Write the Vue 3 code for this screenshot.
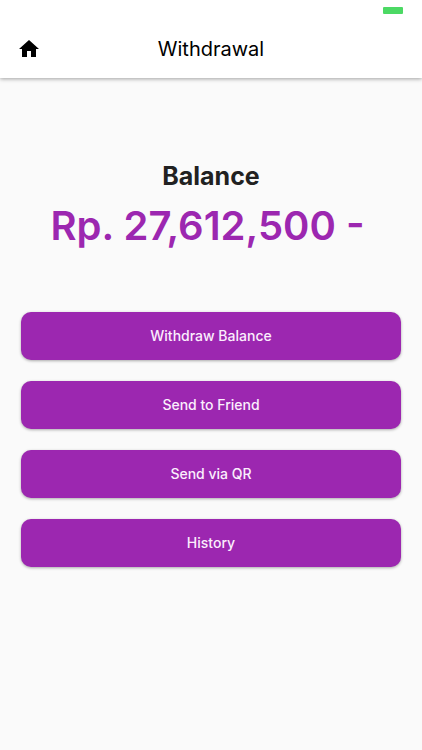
<script setup>
const actions = ['Withdraw Balance', 'Send to Friend', 'Send via QR', 'History']
const balance = 'Rp. 27,612,500 -'
</script>

<template>
  <div class="screen">
    <header class="app-bar">
      <div class="status-bar"><span class="battery"></span></div>
      <div class="toolbar">
        <button class="home" type="button" aria-label="Home">
          <svg viewBox="0 0 24 24" aria-hidden="true">
            <path d="M10 20v-6h4v6h5v-8h3L12 3 2 12h3v8z" />
          </svg>
        </button>
        <h1 class="title">Withdrawal</h1>
      </div>
    </header>

    <main class="content">
      <section class="summary">
        <h2 class="label">Balance</h2>
        <p class="amount">{{ balance }}</p>
      </section>
      <nav class="actions">
        <button v-for="action in actions" :key="action" class="action" type="button">
          {{ action }}
        </button>
      </nav>
    </main>
  </div>
</template>

<style>
body {
  margin: 0;
  background: #fafafa;
}
</style>

<style scoped>
.screen {
  min-height: 100vh;
  background: #fafafa;
  font-family: Inter, "Liberation Sans", sans-serif;
}

.app-bar {
  position: relative;
  background: #fff;
  box-shadow: 0 1px 4px rgba(0, 0, 0, 0.36);
}

.status-bar {
  display: flex;
  justify-content: flex-end;
  box-sizing: border-box;
  height: 20px;
  padding: 7px 19px 0 0;
}

.battery {
  width: 20px;
  height: 7px;
  border-radius: 1px;
  background: #4cd964;
}

.toolbar {
  display: grid;
  grid-template-columns: 24px 1fr 24px;
  align-items: center;
  height: 58px;
  padding: 0 17px;
}

.home {
  width: 24px;
  height: 24px;
  padding: 0;
  border: 0;
  background: none;
  color: #000;
}

.home svg {
  display: block;
  width: 24px;
  height: 24px;
  fill: currentColor;
}

.title {
  margin: 0;
  font-size: 20px;
  font-weight: 400;
  line-height: 24px;
  text-align: center;
  color: #000;
}

.content {
  padding: 81px 21px 24px;
}

.summary {
  text-align: center;
}

.label {
  margin: 0;
  font-size: 25px;
  font-weight: 700;
  line-height: 34px;
  color: #212121;
}

.amount {
  margin: 8px 0 0;
  padding-right: 7px;
  font-size: 40px;
  font-weight: 600;
  line-height: 50px;
  white-space: nowrap;
  color: #9c27b0;
}

.actions {
  display: grid;
  gap: 21px;
  margin-top: 61px;
}

.action {
  height: 48px;
  padding: 0 16px;
  border: 0;
  border-radius: 10px;
  background: #9c27b0;
  box-shadow: 0 1px 3px rgba(0, 0, 0, 0.32);
  font-family: inherit;
  font-size: 14px;
  font-weight: 500;
  line-height: 20px;
  color: #fbeefd;
}
</style>
